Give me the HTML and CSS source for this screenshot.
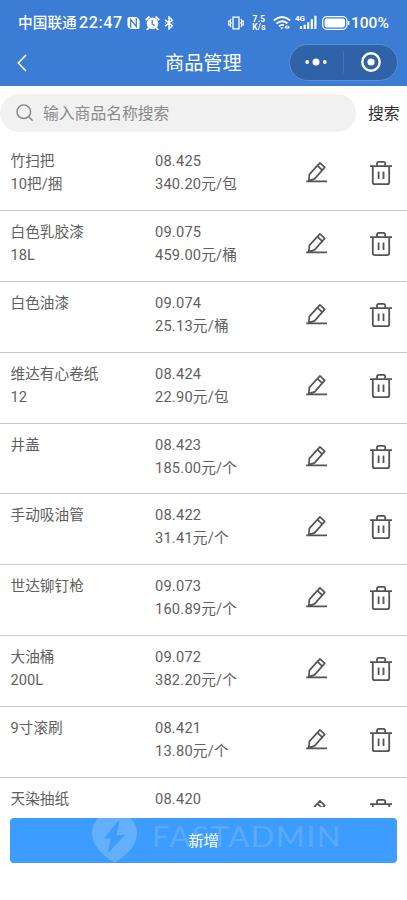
FILE: index.html
```html
<!DOCTYPE html>
<html lang="zh-CN">
<head>
<meta charset="utf-8">
<meta name="viewport" content="width=device-width">
<title>商品管理</title>
<link rel="stylesheet" href="styles.css">
</head>
<body>
<svg class="defs" aria-hidden="true">
  <symbol id="edit" viewBox="0 0 24 24"><path d="M1.2 20.8H23M4 19.8l.6-6.400L15.600 1.500l5 4.600L10 18.100L4 19.800M13 4.400l4.900 4.600"/></symbol>
  <symbol id="trash" viewBox="0 0 24 26"><path d="M1 6.1h22M3.8 6.1v16.1q0 2 2 2h12.4q2 0 2-2V6.1M8 6V3.6q0-1.7 1.7-1.7h4.8q1.7 0 1.7 1.7V6M9.600 11.500v7.500M14.500 11.500v7.500"/></symbol>
</svg>
<header class="top">
  <div class="status">
    <span class="carrier">中国联通</span><span class="time">22:47</span>
    <svg class="nfc" viewBox="0 0 14 14"><path fill="#fff" d="M2.5.5h7q4 1 4 5v6q0 2-2 2h-7q-4-1-4-5v-6q0-2 2-2z"/><path d="M4 12V3.4l6 7.4V2" fill="none" stroke="#3b7cd4" stroke-width="1.4"/></svg>
    <svg class="alarm" viewBox="0 0 14 14"><circle cx="7" cy="7.4" r="5.8" fill="#fff"/><path d="M.8 3.5L3.5 1M13.2 3.5L10.5 1M3 12l-1.2 1.5M11 12l1.2 1.5" stroke="#fff" stroke-width="1.8" stroke-linecap="round"/><path d="M6.7 4v4l2.6 1.5" fill="none" stroke="#3b7cd4" stroke-width="1.2"/></svg>
    <svg class="bt" viewBox="0 0 10 14"><path d="M1 3.8l7.3 6L5 13V1l3.3 3.2L1 10.2M1 7h.6M8.6 7h.7" fill="none" stroke="#fff" stroke-width="1.4"/></svg>
    <svg class="vib" viewBox="0 0 16 14"><path d="M5 1.2h6v11.6H5zM3 3L2 5l1 2-1 2 1 2M.7 4.5v5M13 3l1 2-1 2 1 2-1 2M15.3 4.5v5" fill="none" stroke="#fff" stroke-width="1.3"/></svg>
    <span class="speed"><span>7.5</span><span>K/s</span></span>
    <svg class="wifi" viewBox="0 0 18 14"><path d="M.8 4.5Q9-2.5 17.2 4.5M3.5 7.6Q9 3 14.5 7.4M6 10.2Q9 8 11 9.4" fill="none" stroke="#fff" stroke-width="1.7"/><path d="M7 11.4h3.6L8.8 13.5zM14.5 9.3v4l2.6-2zM13.7 9.3v4l-2.4-2z" fill="#fff"/></svg>
    <svg class="signal" viewBox="0 0 22 15"><text x="0" y="6.2">4G</text><path d="M6 14v-3M9.7 14v-4.2M13.2 14V7.2M16.8 14V4.2M20.4 14V.8" stroke="#fff" stroke-width="2.2" fill="none"/></svg>
    <svg class="battery" viewBox="0 0 28 14"><rect x=".7" y=".7" width="24.2" height="12.6" rx="4" fill="none" stroke="#fff" stroke-width="1.2"/><rect x="2.6" y="2.5" width="20.4" height="9" rx="2.4" fill="#fff"/><path d="M26.6 5v4" stroke="#fff" stroke-width="1.6"/></svg>
    <span class="percent">100%</span>
  </div>
  <nav class="nav">
    <svg class="back" viewBox="0 0 10 18"><path d="M9 1L1.3 9 9 17" fill="none" stroke="#fff" stroke-width="1.6"/></svg>
    <h1>商品管理</h1>
    <div class="capsule">
      <svg class="dots" viewBox="0 0 22 8"><circle cx="2.2" cy="4" r="1.9"/><circle cx="11" cy="4" r="3.5"/><circle cx="19.8" cy="4" r="1.9"/></svg>
      <i></i>
      <svg class="target" viewBox="0 0 20 20"><circle cx="10" cy="10" r="8.7" fill="none" stroke="#fff" stroke-width="2.4"/><circle cx="10" cy="10" r="3.6"/></svg>
    </div>
  </nav>
</header>
<div class="search">
  <div class="field"><svg viewBox="0 0 18 18"><circle cx="7.8" cy="7.7" r="6.8"/><path d="M12.7 12.7l4 4"/></svg><span>输入商品名称搜索</span></div>
  <span class="go">搜索</span>
</div>
<main class="list">
  <div class="row"><p>竹扫把<br>10把/捆</p><p class="num">08.425<br>340.20元/包</p><svg class="edit"><use href="#edit"/></svg><svg class="trash"><use href="#trash"/></svg></div>
  <div class="row"><p>白色乳胶漆<br>18L</p><p class="num">09.075<br>459.00元/桶</p><svg class="edit"><use href="#edit"/></svg><svg class="trash"><use href="#trash"/></svg></div>
  <div class="row"><p>白色油漆</p><p class="num">09.074<br>25.13元/桶</p><svg class="edit"><use href="#edit"/></svg><svg class="trash"><use href="#trash"/></svg></div>
  <div class="row"><p>维达有心卷纸<br>12</p><p class="num">08.424<br>22.90元/包</p><svg class="edit"><use href="#edit"/></svg><svg class="trash"><use href="#trash"/></svg></div>
  <div class="row"><p>井盖</p><p class="num">08.423<br>185.00元/个</p><svg class="edit"><use href="#edit"/></svg><svg class="trash"><use href="#trash"/></svg></div>
  <div class="row"><p>手动吸油管</p><p class="num">08.422<br>31.41元/个</p><svg class="edit"><use href="#edit"/></svg><svg class="trash"><use href="#trash"/></svg></div>
  <div class="row"><p>世达铆钉枪</p><p class="num">09.073<br>160.89元/个</p><svg class="edit"><use href="#edit"/></svg><svg class="trash"><use href="#trash"/></svg></div>
  <div class="row"><p>大油桶<br>200L</p><p class="num">09.072<br>382.20元/个</p><svg class="edit"><use href="#edit"/></svg><svg class="trash"><use href="#trash"/></svg></div>
  <div class="row"><p>9寸滚刷</p><p class="num">08.421<br>13.80元/个</p><svg class="edit"><use href="#edit"/></svg><svg class="trash"><use href="#trash"/></svg></div>
  <div class="row"><p>天染抽纸</p><p class="num">08.420</p><svg class="edit"><use href="#edit"/></svg><svg class="trash"><use href="#trash"/></svg></div>
</main>
<footer class="foot">
  <div class="add">
    <svg class="mark" viewBox="0 0 260 45"><path fill-rule="evenodd" d="M6.5 0Q0 6 0 15C0 28 11 38 22.5 44.5C34 38 45 28 45 15Q45 6 38.5 0ZM26 3L12 20.5H19L15.5 35.5L33 17H24.5L27.5 3Z"/><text x="60" y="29" textLength="190" lengthAdjust="spacingAndGlyphs">FASTADMIN</text></svg>
    <span>新增</span>
  </div>
</footer>
</body>
</html>
```
FILE: styles.css
```css
* { box-sizing: border-box; }
body {
  margin: 0;
  height: 900px;
  overflow: hidden;
  display: flex;
  flex-direction: column;
  background: #fff;
  color: #606060;
  font-family: "Noto Sans CJK SC", sans-serif;
}
h1, p { margin: 0; font-weight: 400; }
svg { display: block; flex: none; }
.defs { display: none; }

.top { height: 86px; flex: none; background: #3b7cd4; color: #fff; }
.status { height: 40px; padding: 5px 0 0 18px; display: flex; align-items: center; font-weight: 500; white-space: nowrap; }
.carrier { width: 61px; padding-bottom: 2px; font-size: 14.7px; }
.time { width: 48px; font-family: Roboto, sans-serif; font-size: 16px; letter-spacing: .6px; }
.nfc { width: 13px; height: 14px; }
.alarm { width: 15px; height: 14px; margin-left: 5px; }
.bt { width: 10px; height: 14px; margin-left: 4px; }
.vib { width: 16px; height: 14px; margin-left: 54px; }
.speed { width: 18px; margin-left: 6px; display: flex; flex-direction: column; align-items: center; font: 700 8.3px/8px Roboto, sans-serif; letter-spacing: .3px; }
.wifi { width: 18px; height: 14px; margin-left: 5px; }
.signal { width: 22px; height: 15px; margin-left: 4px; overflow: visible; }
.signal text { font: 700 8px Roboto, sans-serif; fill: #fff; }
.battery { width: 28px; height: 14px; margin-left: 5px; }
.percent { margin-left: 1px; font-family: Roboto, sans-serif; font-size: 15.5px; }

.nav { height: 45px; padding: 0 9px 0 17px; display: flex; align-items: center; }
.back { width: 10px; height: 18px; }
.nav h1 { margin-left: 138px; width: 124px; padding-bottom: 2px; font-size: 19.2px; line-height: 28px; }
.capsule { width: 109px; height: 37px; margin-bottom: 1px; border: 1px solid #578fda; border-radius: 19px; background: #2f62a7; display: flex; align-items: center; flex: none; }
.capsule svg { fill: #fff; }
.dots { width: 22px; height: 8px; margin-left: 15px; }
.capsule i { width: 1px; height: 22px; margin-left: 16px; background: #4474b3; }
.target { width: 20px; height: 20px; margin-left: 17px; }

.search { height: 54px; flex: none; display: flex; align-items: center; }
.field { width: 356px; height: 38px; padding-left: 16px; border-radius: 19px; background: #f1f1f1; display: flex; align-items: center; gap: 9px; color: #8a8a8a; font-size: 15.8px; }
.field span, .go { padding-bottom: 2px; }
.field svg { width: 18px; height: 18px; fill: none; stroke: #858585; stroke-width: 1.4; }
.go { margin-left: 12px; color: #303133; font-size: 15.8px; }

.list { height: 667px; flex: none; overflow: hidden; }
.row { height: 70.9px; padding: 10px 0 0 10.5px; border-bottom: 1px solid #c8c8c8; display: grid; grid-template-columns: 144.5px 150px 64px 24px; align-items: start; font-family: Roboto, "Noto Sans CJK SC", sans-serif; font-size: 14.67px; line-height: 23px; }
.num { letter-spacing: .2px; }
.row svg { fill: none; stroke: #555; stroke-width: 1.8; stroke-linejoin: round; }
.edit { width: 23px; height: 24px; margin-top: 11px; }
.trash { width: 24px; height: 26px; margin-top: 10px; }

.foot { padding: 10.5px 10px 0; }
.add { height: 45px; border-radius: 4px; background: #3c9cff; color: #fff; font-size: 15.3px; display: grid; place-items: center; }
.add > * { grid-area: 1 / 1; }
.add span { padding-bottom: 3px; }
.mark { width: 260px; height: 45px; justify-self: start; margin-left: 82px; fill: #fff; opacity: .2; }
.mark text { font: 400 28px Lato, sans-serif; letter-spacing: 1.5px; opacity: .75; }
```
